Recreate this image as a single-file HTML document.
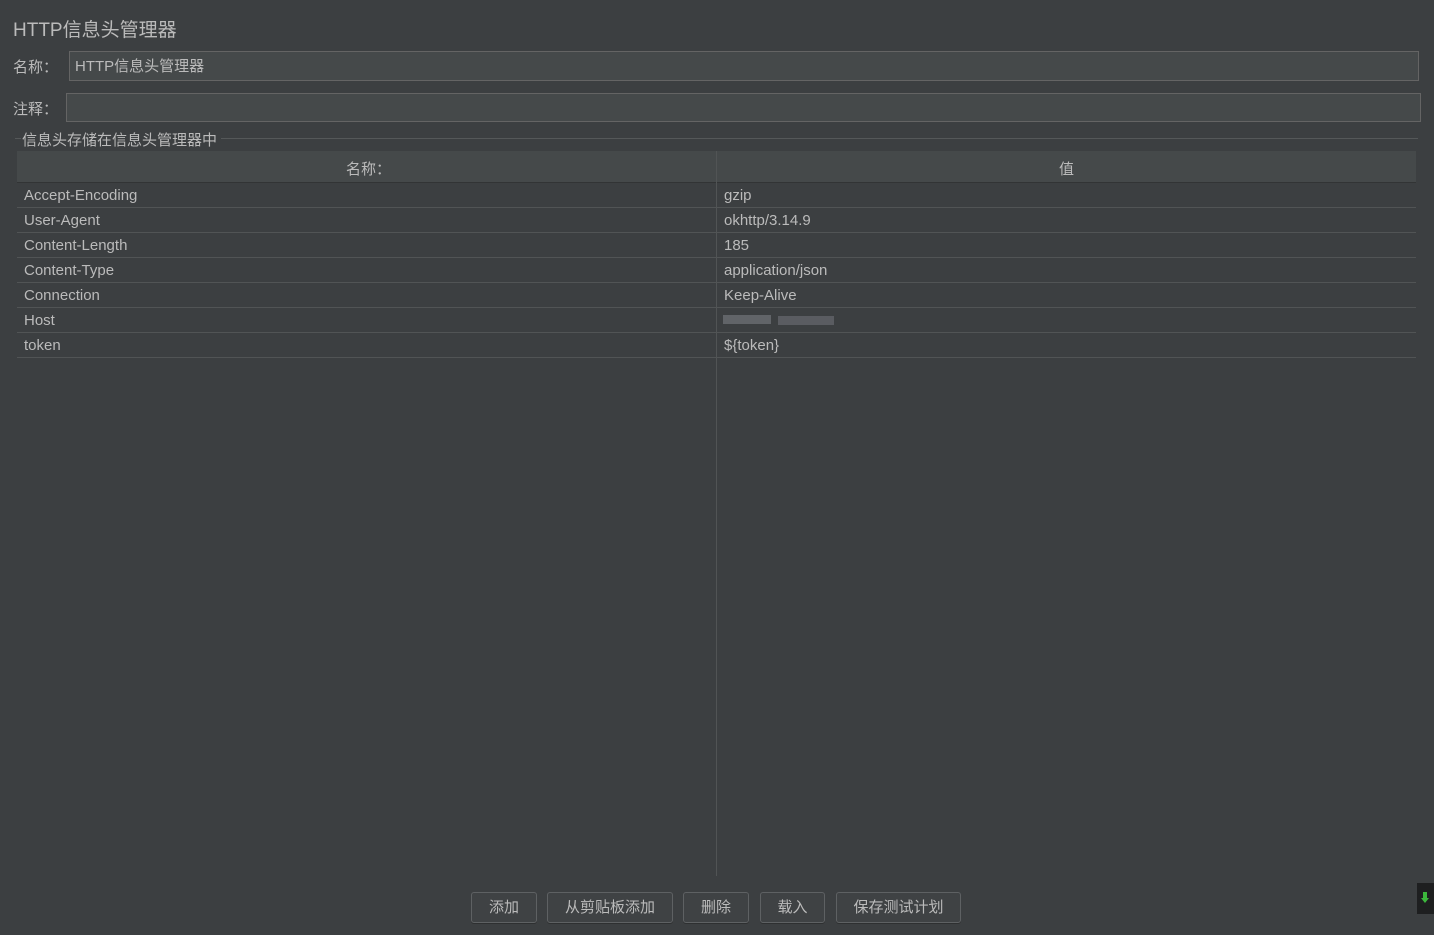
<!DOCTYPE html>
<html><head><meta charset="utf-8"><style>
*{margin:0;padding:0;box-sizing:border-box}
body{width:1434px;height:935px;background:#3c3f41;color:#bbbbbb;font-family:"Liberation Sans","Noto Sans CJK SC",sans-serif;position:relative;overflow:hidden;font-size:15px}
.a{position:absolute}
.inp{position:absolute;background:#45494a;border:1px solid #646464}
.row{position:absolute;left:17px;width:1399px;height:25px;border-bottom:1px solid #515455;line-height:26px}
.row span{position:absolute;left:7px}
.row span+span{left:707px}
.btn{position:absolute;top:892px;height:31px;border:1px solid #5e6163;border-radius:3px;background:#3f4244;text-align:center;line-height:30px;font-size:15px;box-shadow:0 1px 0 #2e3031}
</style></head><body>
<div class="a" style="left:13px;top:15px;font-size:19px">HTTP信息头管理器</div>
<div class="a" style="left:13px;top:56px">名称：</div>
<div class="inp" style="left:69px;top:51px;width:1350px;height:30px;padding-left:5px;line-height:30px">HTTP信息头管理器</div>
<div class="a" style="left:13px;top:98px">注释：</div>
<div class="inp" style="left:66px;top:93px;width:1355px;height:29px"></div>
<div class="a" style="left:15px;top:138px;width:1403px;height:1px;background:#555859"></div>
<div class="a" style="left:21px;top:129px;background:#3c3f41;padding:0 4px 0 1px">信息头存储在信息头管理器中</div>
<div class="a" style="left:17px;top:151px;width:1399px;height:32px;background:#45494a;border-bottom:1px solid #323435"></div>
<div class="a" style="left:346px;top:158px">名称：</div>
<div class="a" style="left:1059px;top:158px">值</div>
<div class="a" style="left:716px;top:151px;width:1px;height:725px;background:#515455"></div>
<div class="row" style="top:183px"><span>Accept-Encoding</span><span>gzip</span></div>
<div class="row" style="top:208px"><span>User-Agent</span><span>okhttp/3.14.9</span></div>
<div class="row" style="top:233px"><span>Content-Length</span><span>185</span></div>
<div class="row" style="top:258px"><span>Content-Type</span><span>application/json</span></div>
<div class="row" style="top:283px"><span>Connection</span><span>Keep-Alive</span></div>
<div class="row" style="top:308px"><span>Host</span><span></span></div>
<div class="row" style="top:333px"><span>token</span><span>${token}</span></div>
<div class="a" style="left:723px;top:315px;width:48px;height:9px;background:#6a6e72;opacity:.8"></div>
<div class="a" style="left:778px;top:316px;width:56px;height:9px;background:#666a6f;opacity:.7"></div>
<div class="a" style="left:716px;top:308px;width:1px;height:25px;background:#515455"></div>
<div class="btn" style="left:471px;width:66px">添加</div>
<div class="btn" style="left:547px;width:126px">从剪贴板添加</div>
<div class="btn" style="left:683px;width:66px">删除</div>
<div class="btn" style="left:760px;width:65px">载入</div>
<div class="btn" style="left:836px;width:125px">保存测试计划</div>
<div class="a" style="left:1417px;top:883px;width:17px;height:31px;background:#1e1f20"></div>
<div class="a" style="left:1423px;top:892px;width:4px;height:6px;background:#3cb83c"></div>
<div class="a" style="left:1421px;top:898px;width:0;height:0;border-left:4px solid transparent;border-right:4px solid transparent;border-top:5px solid #3cb83c"></div>
</body></html>
